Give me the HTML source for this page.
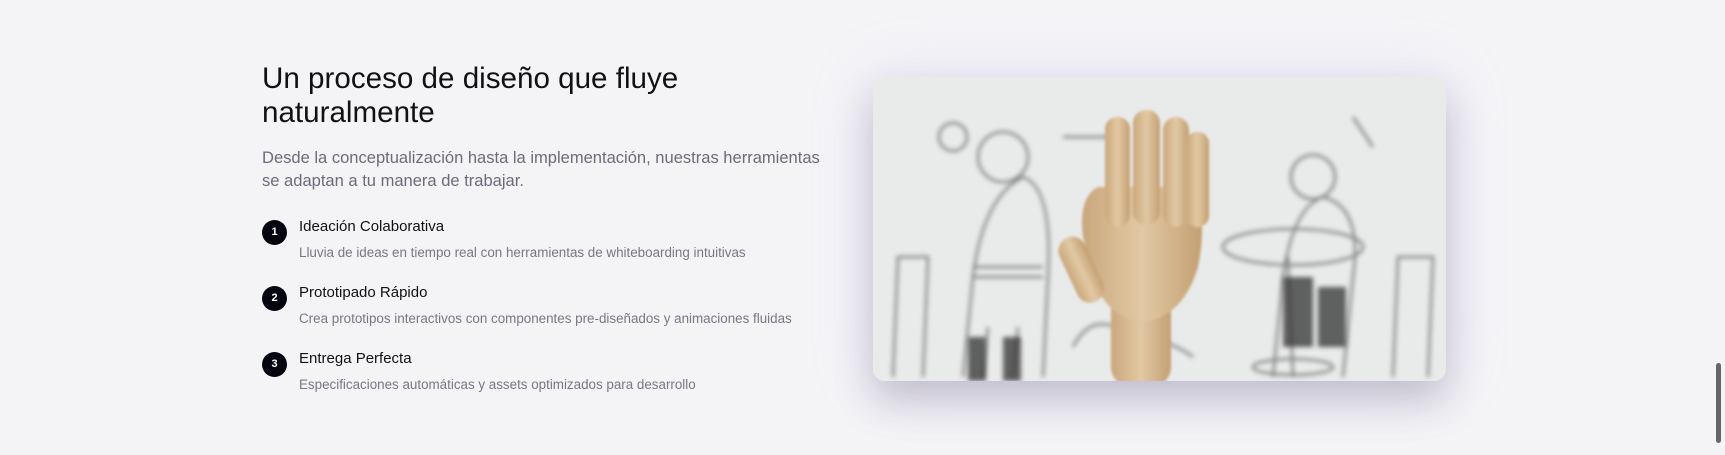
<!DOCTYPE html>
<html><head><meta charset="utf-8"><style>
*{margin:0;padding:0;box-sizing:border-box}
html,body{width:1725px;height:455px;overflow:hidden;background:#f4f4f7;font-family:"Liberation Sans",sans-serif}
.h{position:absolute;left:262px;top:62px;font-size:29.6px;line-height:34px;color:#111;font-weight:400;width:600px}
.p{position:absolute;left:262px;top:146px;font-size:16.55px;line-height:23px;color:#6b6b7b;width:600px}
.item{position:absolute;left:262px;width:600px}
.num{position:absolute;left:0;top:0;width:25px;height:25px;border-radius:50%;background:#050510;color:#fff;font-size:11px;font-weight:700;text-align:center;line-height:25px}
.t{position:absolute;left:37px;top:-2px;font-size:15px;color:#111;white-space:nowrap}
.d{position:absolute;left:37px;top:25px;font-size:13.4px;color:#777786;white-space:nowrap}
.img{position:absolute;left:873px;top:77px;width:573px;height:304px;border-radius:12px;overflow:hidden;background:#eceded;box-shadow:0 20px 40px rgba(40,30,70,.22),0 0 60px rgba(200,180,240,.25)}
.sb{position:absolute;left:1716px;top:363px;width:5px;height:80px;background:#666;border-radius:3px}
</style></head><body>
<div class="h">Un proceso de diseño que fluye<br>naturalmente</div>
<div class="p">Desde la conceptualización hasta la implementación, nuestras herramientas<br>se adaptan a tu manera de trabajar.</div>
<div class="item" style="top:220px"><div class="num">1</div><div class="t">Ideación Colaborativa</div><div class="d">Lluvia de ideas en tiempo real con herramientas de whiteboarding intuitivas</div></div>
<div class="item" style="top:286px"><div class="num">2</div><div class="t">Prototipado Rápido</div><div class="d">Crea prototipos interactivos con componentes pre-diseñados y animaciones fluidas</div></div>
<div class="item" style="top:352px"><div class="num">3</div><div class="t">Entrega Perfecta</div><div class="d">Especificaciones automáticas y assets optimizados para desarrollo</div></div>
<div class="img">
<svg width="573" height="304" viewBox="0 0 573 304">
<defs><filter id="b"><feGaussianBlur stdDeviation="2.5"/></filter><filter id="b2"><feGaussianBlur stdDeviation="1.2"/></filter>
<linearGradient id="w" x1="0" x2="1"><stop offset="0" stop-color="#c9a77c"/><stop offset=".5" stop-color="#e2c9a4"/><stop offset="1" stop-color="#c49f73"/></linearGradient></defs>
<rect width="573" height="304" fill="#e9eaea"/>
<g filter="url(#b)" fill="none" stroke="#555" stroke-width="2.5" opacity=".7">
<path d="M90 300 L100 200 Q110 120 150 100 Q180 110 175 200 L170 300"/>
<path d="M100 190 L170 190 M100 200 L170 200"/>
<path d="M110 300 L115 250 M140 300 L145 250"/>
<circle cx="130" cy="80" r="25"/>
<path d="M20 300 L25 180 L55 180 L50 300"/>
<path d="M400 300 L410 200 Q420 130 450 120 Q490 130 480 200 L470 300"/>
<ellipse cx="420" cy="170" rx="70" ry="18"/>
<path d="M415 180 L420 300"/><ellipse cx="420" cy="290" rx="40" ry="8"/>
<circle cx="440" cy="100" r="22"/>
<path d="M520 300 L525 180 L560 180 L555 300"/>
<path d="M250 280 Q280 250 320 280"/><path d="M200 270 Q220 230 260 260"/>
<circle cx="80" cy="60" r="14"/><path d="M190 60 L240 60 M480 40 L500 70"/>
</g>
<g fill="#333" filter="url(#b)" opacity=".75">
<rect x="95" y="260" width="18" height="44"/><rect x="130" y="260" width="18" height="44"/>
<rect x="410" y="200" width="30" height="70"/><rect x="445" y="210" width="28" height="60"/>
</g>
<g filter="url(#b2)" fill="url(#w)">
<rect x="238" y="200" width="60" height="110" rx="20"/>
<path d="M210 160 Q205 120 225 110 L320 110 Q335 140 325 190 Q310 240 270 245 Q235 240 225 210 Z"/>
<rect x="232" y="40" width="25" height="110" rx="12"/>
<rect x="260" y="33" width="27" height="115" rx="13"/>
<rect x="290" y="40" width="26" height="110" rx="13"/>
<rect x="313" y="55" width="23" height="95" rx="11"/>
<rect x="193" y="158" width="28" height="70" rx="14" transform="rotate(-25 207 190)"/>
</g>
</svg>
</div>
<div class="sb"></div>
</body></html>
